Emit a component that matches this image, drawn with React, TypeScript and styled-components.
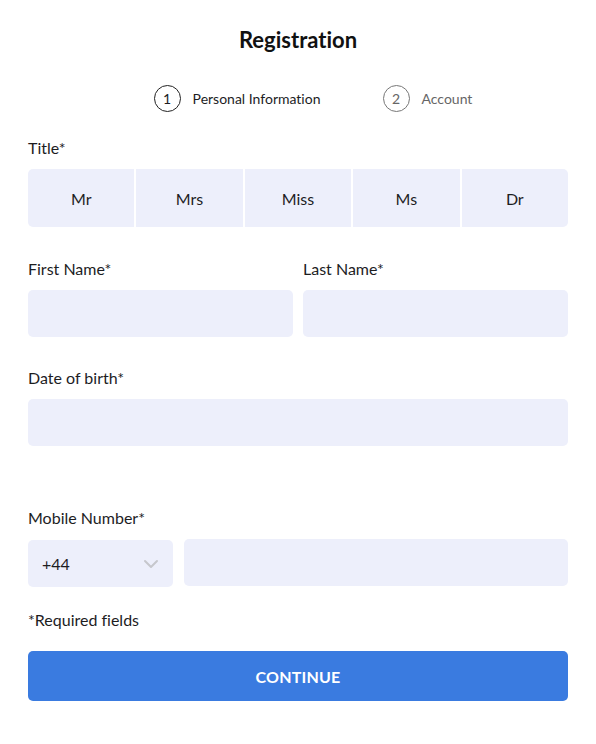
import { useState } from 'react';
import styled, { createGlobalStyle } from 'styled-components';

const GlobalStyle = createGlobalStyle`
  body {
    margin: 0;
    background: #fff;
    font-family: 'Source Sans Pro', Lato, 'Noto Sans', sans-serif;
    font-variant-ligatures: none;
    color: #1d1d1f;
  }
  * { box-sizing: border-box; }
`;

const titles = ['Mr', 'Mrs', 'Miss', 'Ms', 'Dr'];

const App = () => {
  const [title, setTitle] = useState<string>('');

  return (
    <Wrapper>
      <GlobalStyle />
      <Heading>Registration</Heading>
      <Steps>
        <Step active>
          <StepNumber active>1</StepNumber>
          Personal Information
        </Step>
        <Step>
          <StepNumber>2</StepNumber>
          Account
        </Step>
      </Steps>

      <Label>Title*</Label>
      <TitleGroup>
        {titles.map(t => (
          <TitleButton key={t} selected={title === t} onClick={() => setTitle(t)}>
            {t}
          </TitleButton>
        ))}
      </TitleGroup>

      <Row>
        <Field>
          <Label>First Name*</Label>
          <Input />
        </Field>
        <Field>
          <Label>Last Name*</Label>
          <Input />
        </Field>
      </Row>

      <Section>
        <Label>Date of birth*</Label>
        <Input />
      </Section>

      <MobileSection>
        <Label>Mobile Number*</Label>
        <PhoneRow>
          <Select>
            +44
            <svg width="16" height="10" viewBox="0 0 16 10" fill="none">
              <path d="M2 2l6 6 6-6" stroke="#c6c7cc" strokeWidth="2" strokeLinecap="round" strokeLinejoin="round" />
            </svg>
          </Select>
          <PhoneInput />
        </PhoneRow>
      </MobileSection>

      <Required>*Required fields</Required>
      <ContinueButton>CONTINUE</ContinueButton>
    </Wrapper>
  );
};

export default App;

const Wrapper = styled.div`
  width: 596px;
  padding: 26px 28px 40px;
  display: flex;
  flex-direction: column;
`;

const Heading = styled.h1`
  margin: 0;
  text-align: center;
  font-size: 22px;
  line-height: 28px;
  font-weight: 700;
  color: #111;
`;

const Steps = styled.div`
  display: flex;
  justify-content: center;
  gap: 62px;
  margin-top: 31px;
  margin-bottom: 26px;
  padding-left: 30px;
`;

const Step = styled.div<{ active?: boolean }>`
  display: flex;
  align-items: center;
  gap: 12px;
  font-size: 14px;
  color: ${props => (props.active ? '#1d1d1f' : '#666')};
`;

const StepNumber = styled.span<{ active?: boolean }>`
  width: 27px;
  height: 27px;
  border-radius: 50%;
  border: 1px solid ${props => (props.active ? '#222' : '#777')};
  display: flex;
  align-items: center;
  justify-content: center;
  font-size: 14px;
`;

const Label = styled.div`
  font-size: 16px;
  line-height: 20px;
  margin-bottom: 11px;
`;

const TitleGroup = styled.div`
  display: grid;
  grid-template-columns: repeat(5, 1fr);
  gap: 2px;
  border-radius: 5px;
  overflow: hidden;
`;

const TitleButton = styled.button<{ selected: boolean }>`
  height: 58px;
  border: none;
  background: ${props => (props.selected ? '#3a7be0' : '#edeffb')};
  color: ${props => (props.selected ? '#fff' : '#1d1d1f')};
  font-family: inherit;
  font-size: 16px;
  cursor: pointer;
`;

const Row = styled.div`
  display: flex;
  gap: 10px;
  margin-top: 32px;
`;

const Field = styled.div`
  flex: 1;
  display: flex;
  flex-direction: column;
`;

const Section = styled.div`
  display: flex;
  flex-direction: column;
  margin-top: 31px;
`;

const MobileSection = styled(Section)`
  margin-top: 62px;
`;

const Input = styled.input`
  height: 47px;
  border: none;
  border-radius: 5px;
  background: #edeffb;
  padding: 0 14px;
  font-family: inherit;
  font-size: 16px;
  outline: none;
`;

const PhoneRow = styled.div`
  display: flex;
  align-items: flex-start;
  gap: 11px;
`;

const Select = styled.div`
  width: 145px;
  height: 47px;
  margin-top: 1px;
  border-radius: 5px;
  background: #edeffb;
  display: flex;
  align-items: center;
  justify-content: space-between;
  padding: 0 14px 0 14px;
  font-size: 16px;
`;

const PhoneInput = styled(Input)`
  flex: 1;
`;

const Required = styled.div`
  margin-top: 23px;
  font-size: 16px;
  line-height: 20px;
`;

const ContinueButton = styled.button`
  margin-top: 21px;
  height: 50px;
  border: none;
  border-radius: 5px;
  background: #3a7be0;
  color: #fff;
  font-family: inherit;
  font-size: 16px;
  font-weight: 700;
  letter-spacing: 0.2px;
  cursor: pointer;
`;
